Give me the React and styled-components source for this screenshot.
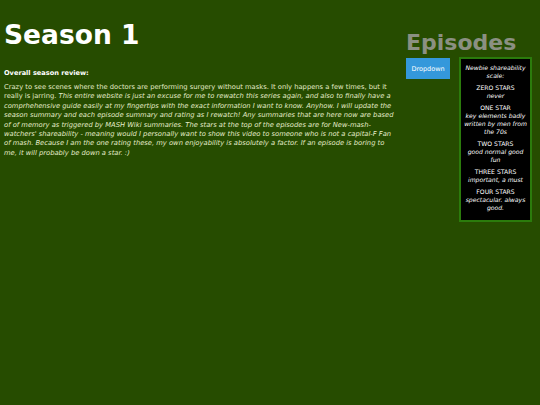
import React from "react";
import styled, { createGlobalStyle } from "styled-components";

const Global = createGlobalStyle`
  html, body {
    margin: 0;
    padding: 0;
    background: #264c00;
  }
  body {
    font-family: "DejaVu Sans", Verdana, sans-serif;
    width: 540px;
    height: 405px;
    overflow: hidden;
  }
`;

const Page = styled.div`
  display: flex;
  align-items: flex-start;
  height: 405px;
  background: #264c00;
`;

const Main = styled.main`
  width: 403px;
  padding: 0 4px;
  box-sizing: border-box;
`;

const Title = styled.h1`
  margin: 20px 0 0;
  font-size: 26.5px;
  line-height: 30px;
  font-weight: bold;
  color: #ffffff;
`;

const ReviewLabel = styled.h3`
  margin: 19px 0 0;
  font-size: 6.6px;
  line-height: 9px;
  font-weight: bold;
  color: #ffffff;
`;

const Review = styled.p`
  margin: 5px 0 0;
  font-size: 6.76px;
  line-height: 9.4px;
  color: #e3ebc8;
`;

const Side = styled.aside`
  flex: 1;
  padding-left: 3px;
`;

const SideTitle = styled.h2`
  margin: 30px 0 0;
  font-size: 22px;
  line-height: 26px;
  font-weight: bold;
  color: #8b9082;
`;

const SideRow = styled.div`
  display: flex;
  align-items: flex-start;
  gap: 9px;
  margin-top: 1px;
`;

const DropButton = styled.button`
  width: 44px;
  height: 21px;
  margin-top: 1px;
  padding: 0;
  border: none;
  background: #3498db;
  color: #ffffff;
  font-family: "DejaVu Sans", Verdana, sans-serif;
  font-size: 6.5px;
`;

const Scale = styled.div`
  width: 73px;
  box-sizing: border-box;
  background: #000000;
  border: 2px solid #2b7b0c;
  padding: 5px 1px 8px;
  color: #ffffff;
  text-align: center;
  font-size: 6.1px;
  line-height: 8px;
`;

const ScaleIntro = styled.div`
  font-style: italic;
`;

const Level = styled.div`
  margin-top: 4px;
`;

const LevelNote = styled.div`
  font-style: italic;
`;

const levels = [
  ["ZERO STARS", "never"],
  ["ONE STAR", "key elements badly written by men from the 70s"],
  ["TWO STARS", "good normal good fun"],
  ["THREE STARS", "important, a must"],
  ["FOUR STARS", "spectacular. always good."],
];

export default function App() {
  return (
    <Page>
      <Global />
      <Main>
        <Title>Season 1</Title>
        <ReviewLabel>Overall season review:</ReviewLabel>
        <Review>
          Crazy to see scenes where the doctors are performing surgery without masks. It only
          happens a few times, but it really is jarring.{" "}
          <em>
            This entire website is just an excuse for me to rewatch this series again, and also
            to finally have a comprhehensive guide easily at my fingertips with the exact
            information I want to know. Anyhow. I will update the season summary and each episode
            summary and rating as I rewatch! Any summaries that are here now are based of of
            memory as triggered by MASH Wiki summaries. The stars at the top of the episodes are
            for New-mash-watchers' shareability - meaning would I personally want to show this
            video to someone who is not a capital-F Fan of mash. Because I am the one rating
            these, my own enjoyability is absolutely a factor. If an episode is boring to me, it
            will probably be down a star. :)
          </em>
        </Review>
      </Main>
      <Side>
        <SideTitle>Episodes</SideTitle>
        <SideRow>
          <DropButton>Dropdown</DropButton>
          <Scale>
            <ScaleIntro>Newbie shareability scale:</ScaleIntro>
            {levels.map(([name, note]) => (
              <Level key={name}>
                <div>{name}</div>
                <LevelNote>{note}</LevelNote>
              </Level>
            ))}
          </Scale>
        </SideRow>
      </Side>
    </Page>
  );
}
